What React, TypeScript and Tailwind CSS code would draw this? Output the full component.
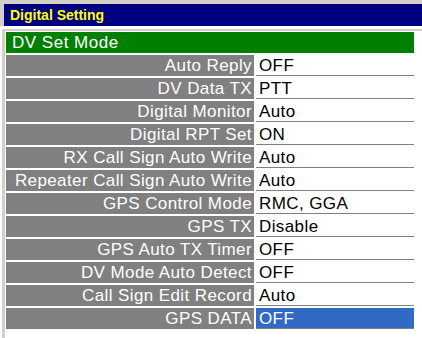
import React from "react";

const rows: [string, string][] = [
  ["Auto Reply", "OFF"],
  ["DV Data TX", "PTT"],
  ["Digital Monitor", "Auto"],
  ["Digital RPT Set", "ON"],
  ["RX Call Sign Auto Write", "Auto"],
  ["Repeater Call Sign Auto Write", "Auto"],
  ["GPS Control Mode", "RMC, GGA"],
  ["GPS TX", "Disable"],
  ["GPS Auto TX Timer", "OFF"],
  ["DV Mode Auto Detect", "OFF"],
  ["Call Sign Edit Record", "Auto"],
  ["GPS DATA", "OFF"],
];

export default function App() {
  return (
    <div
      className="w-[422px] h-[338px] bg-white overflow-hidden"
      style={{ fontFamily: '"Liberation Sans", Arial, sans-serif' }}
    >
      <div className="bg-[#d4d0c8] pt-[4px] pl-[4px]">
        <div className="h-[22px] bg-[#000080] flex items-center pl-[6px]">
          <span className="text-[14px] font-bold text-[#ffff00] leading-none">Digital Setting</span>
        </div>
      </div>
      <div className="h-[3px]" />
      <div className="flex">
        <div className="w-[2px]" />
        <div className="flex-1 flex flex-col">
          <div className="h-[2px] bg-[#d4d0c8]" />
          <div className="flex">
            <div className="w-[3px] h-[310px] bg-[#d4d0c8]" />
            <div className="w-[1px]" />
            <div className="w-[408px] flex flex-col pt-[1px]">
              <div className="h-[21px] bg-[#008000] flex items-center pl-[6px]">
                <span className="text-[17px] tracking-[0.5px] text-white leading-none">DV Set Mode</span>
              </div>
              <div className="flex flex-col gap-[2px] pt-[2px]">
                {rows.map(([label, value], i) => {
                  const sel = i === rows.length - 1;
                  return (
                    <div key={label} className="flex h-[21px] gap-[2px]">
                      <div className="w-[248px] bg-[#808080] flex items-center justify-end pr-[2px]">
                        <span className="text-[17px] tracking-[0.4px] text-white leading-none whitespace-nowrap">
                          {label}
                        </span>
                      </div>
                      <div
                        className={
                          sel
                            ? "flex-1 bg-[#316ac5] border-b border-[#808080] flex items-center pl-[3px]"
                            : "flex-1 bg-white border-b border-[#808080] flex items-center pl-[3px]"
                        }
                      >
                        <span
                          className={
                            sel
                              ? "text-[17px] tracking-[0.4px] text-white leading-none whitespace-nowrap"
                              : "text-[17px] tracking-[0.4px] text-black leading-none whitespace-nowrap"
                          }
                        >
                          {value}
                        </span>
                      </div>
                    </div>
                  );
                })}
              </div>
            </div>
          </div>
        </div>
      </div>
    </div>
  );
}
